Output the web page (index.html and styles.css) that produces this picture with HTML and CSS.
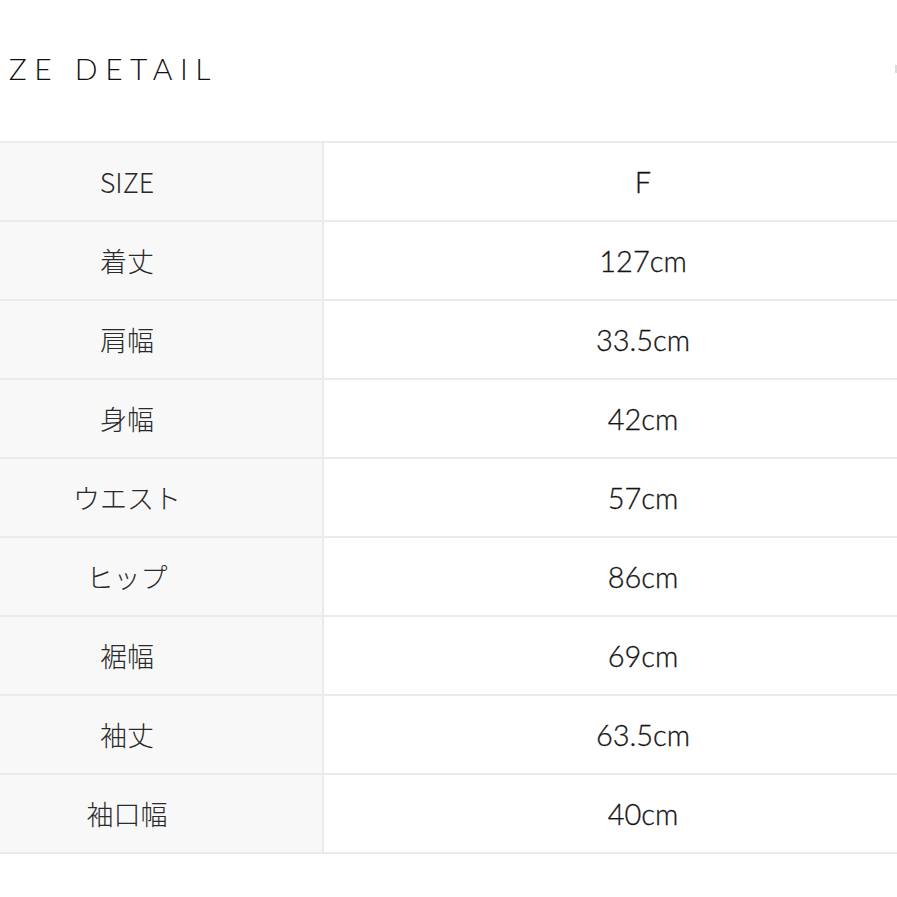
FILE: index.html
```html
<!DOCTYPE html>
<html lang="ja">
<head>
<meta charset="utf-8">
<title>SIZE DETAIL</title>
<link rel="stylesheet" href="styles.css">
</head>
<body>
<div class="page">
  <div class="head">
    <h2 class="title">SIZE DETAIL</h2>
    <span class="toggle"></span>
  </div>
  <table class="size-table">
    <tbody>
      <tr><th>SIZE</th><td>F</td></tr>
      <tr><th>着丈</th><td>127cm</td></tr>
      <tr><th>肩幅</th><td>33.5cm</td></tr>
      <tr><th>身幅</th><td>42cm</td></tr>
      <tr><th>ウエスト</th><td>57cm</td></tr>
      <tr><th>ヒップ</th><td>86cm</td></tr>
      <tr><th>裾幅</th><td>69cm</td></tr>
      <tr><th>袖丈</th><td>63.5cm</td></tr>
      <tr><th>袖口幅</th><td>40cm</td></tr>
    </tbody>
  </table>
</div>
</body>
</html>
```

FILE: styles.css
```css
html, body {
  margin: 0;
  padding: 0;
  background: #ffffff;
  overflow: hidden;
}

.page {
  width: 1040px;
  margin-left: -70px;
}

.head {
  display: flex;
  align-items: center;
  justify-content: space-between;
  height: 141px;
  margin-right: 72px;
}

.title {
  margin: 0 0 0 40px;
  padding-bottom: 6px;
  font-family: "Lato", "Liberation Sans", sans-serif;
  font-weight: 300;
  font-size: 30px;
  letter-spacing: 0.25em;
  color: #111111;
}

.toggle {
  width: 3px;
  height: 8px;
  background: #dcdcdc;
  margin-bottom: 4px;
}

.size-table {
  border-collapse: collapse;
  width: 1034px;
}

.size-table th,
.size-table td {
  height: 77px;
  border: 2px solid #ebebeb;
  text-align: center;
  vertical-align: middle;
  color: #2a2a2a;
  padding: 0;
}

.size-table th {
  width: 390px;
  background: #f8f8f8;
  font-family: "Noto Sans CJK JP", "Noto Sans", sans-serif;
  font-weight: 300;
  font-size: 27px;
}

.size-table td {
  background: #ffffff;
  font-family: "Lato", "Liberation Sans", sans-serif;
  font-weight: 300;
  font-size: 29px;
  color: #141414;
  -webkit-text-stroke: 0.3px #141414;
}
```
